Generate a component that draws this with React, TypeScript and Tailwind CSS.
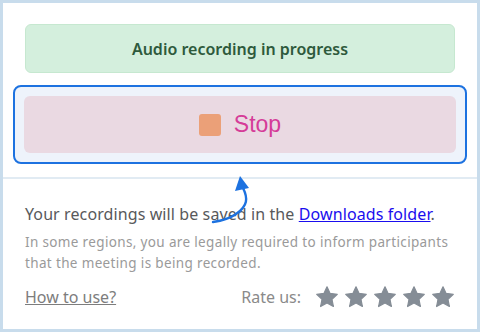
function Star() {
  return (
    <svg viewBox="0 0 24 24" className="w-[24px] h-[24px]" fill="#858d96">
      <path
        d="M12 1.8l3.1 6.6 7.2.9-5.3 5 1.4 7.2L12 18l-6.4 3.5L7 14.3l-5.3-5 7.2-.9z"
        stroke="#858d96"
        strokeWidth="1.2"
        strokeLinejoin="round"
      />
    </svg>
  );
}

export default function App() {
  return (
    <div className="w-[480px] h-[332px] border-[3px] border-[#c8dcec] bg-white flex flex-col font-['Noto_Sans',sans-serif]">
      <div className="flex flex-col px-[10px] pt-[21px] pb-[13px] gap-[12px]">
        <div className="mx-[12px] h-[49px] rounded-[6px] bg-[#d4efdd] border border-[#c6e8d0] flex items-center justify-center text-[16px] font-semibold text-[#2e5a3c]">
          Audio recording in progress
        </div>
        <div className="h-[79px] rounded-[8px] border-2 border-[#1d72e0] bg-[#eef3fb] p-[9px]">
          <div className="h-full rounded-[6px] bg-[#ead9e2] flex items-center justify-center gap-[13px]">
            <div className="w-[22px] h-[22px] rounded-[3px] bg-[#eba078]" />
            <span className="font-['Liberation_Sans',sans-serif] text-[23px] text-[#d53c98]">Stop</span>
          </div>
        </div>
      </div>
      <div className="h-[2px] bg-[#e1ebf3]" />
      <div className="relative flex flex-col px-[22px] pt-[24px]">
        <p className="text-[16px] tracking-[0.1px] text-[#58595b] leading-[22px]">
          Your recordings will be saved in the{" "}
          <a href="#" className="text-[#1a0dee] underline">Downloads folder</a>.
        </p>
        <svg className="absolute left-[202px] top-[-5px]" width="50" height="52" viewBox="0 0 50 52" fill="none">
          <path d="M38 14 C 43 24, 43 32, 31 40 C 24 45, 15 47, 8 48" stroke="#1d72e0" strokeWidth="2.4" strokeLinecap="round" />
          <path d="M35 2 L30 17 L44 14 Z" fill="#1d72e0" />
        </svg>
        <p className="mt-[7px] text-[13.5px] tracking-[0.35px] leading-[21px] text-[#9a9a9a]">
          In some regions, you are legally required to inform participants that the meeting is being recorded.
        </p>
        <div className="mt-[11px] flex items-center justify-between">
          <a href="#" className="text-[16px] text-[#7d7d7d] underline">How to use?</a>
          <div className="flex items-center gap-[14px]">
            <span className="text-[16px] text-[#8a8a8a]">Rate us:</span>
            <div className="flex gap-[5px]">
              <Star /><Star /><Star /><Star /><Star />
            </div>
          </div>
        </div>
      </div>
    </div>
  );
}
